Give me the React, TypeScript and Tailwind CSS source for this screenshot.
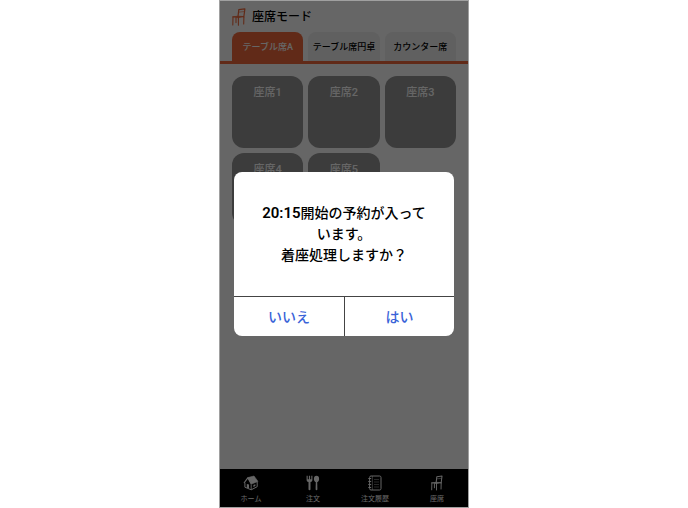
import { useState } from "react";

const tabs = ["テーブル席A", "テーブル席円卓", "カウンター席"];

const seats = ["座席1", "座席2", "座席3", "座席4", "座席5"];

function ChairIcon({ className }: { className?: string }) {
    return (
        <svg viewBox="0 0 14 18" fill="none" stroke="currentColor" strokeLinejoin="round" strokeLinecap="round" className={className} aria-hidden="true">
            <path d="M6 8.6 6.8 1.6 12.9.8 11.8 9" strokeWidth="1.2" />
            <path d="M6.8 4.2 12.4 3.5" strokeWidth=".6" />
            <path d="M.9 8.8 6 8.2 12 8.6 6.4 9.6Z" fill="currentColor" strokeWidth=".8" />
            <path d="M1 9 .8 17M6.4 9.6V17.2M11.9 9 11.7 16M4 9.8V14.6" strokeWidth="1.1" />
        </svg>
    );
}

function HomeIcon() {
    return (
        <svg viewBox="0 0 16 16" fill="none" strokeLinejoin="round" className="size-4" aria-hidden="true">
            <path d="M4.8 2.6 11 1 15 6.4 8.6 9Z" fill="currentColor" stroke="currentColor" strokeWidth=".6" />
            <path d="M1 8 4.8 2.8 8.4 9.2" stroke="currentColor" strokeWidth="1.2" />
            <path d="M1.9 7.8V12.2L8.2 14.8 14.2 11.7V7" stroke="currentColor" strokeWidth="1" />
            <path d="M8.2 9.4V14.8" stroke="currentColor" strokeWidth=".9" />
            <path d="M3.8 12.7V8.9L6 9.6V13.6Z" fill="currentColor" />
            <path d="M10.4 10.1 12.4 9.2V11L10.4 11.9Z" fill="currentColor" />
        </svg>
    );
}

function MealIcon() {
    return (
        <svg viewBox="0 0 16 16" className="size-4" fill="currentColor" aria-hidden="true">
            <path d="M1.6.8H2.7V4.2H3.9V.8H5.1V4.2H6.3V.8H7.4V5.2Q7.4 6.6 5.5 7.1V14.2Q5.5 15.2 4.5 15.2T3.5 14.2V7.1Q1.6 6.6 1.6 5.2Z" />
            <ellipse cx="11.5" cy="3.9" rx="2.6" ry="3.1" />
            <path d="M10.8 6H12.2L12.4 14.2Q12.4 15.2 11.5 15.2T10.6 14.2Z" />
        </svg>
    );
}

function NotebookIcon() {
    return (
        <svg viewBox="0 0 16 16" fill="none" stroke="currentColor" className="size-4" aria-hidden="true">
            <rect x="2.6" y="1" width="11.4" height="14" rx="1.4" strokeWidth="1" />
            <path d="M5.4 1V15" strokeWidth=".5" />
            <path d="M1.3 3.5H4.2M1.3 6.5H4.2M1.3 9.5H4.2M1.3 12.5H4.2" strokeWidth="1" />
            <path d="M7 4.5H12M7 7H12M7 9.5H12M7 12H12" strokeWidth=".4" />
        </svg>
    );
}

const navItems = [
    { label: "ホーム", icon: <HomeIcon /> },
    { label: "注文", icon: <MealIcon /> },
    { label: "注文履歴", icon: <NotebookIcon /> },
    { label: "座席", icon: <ChairIcon className="h-4 w-3" /> },
];

export default function App() {
    const [activeTab, setActiveTab] = useState(0);
    const [dialogOpen, setDialogOpen] = useState(true);

    return (
        <div className="min-h-screen bg-white font-['Roboto','Noto_Sans_CJK_JP',sans-serif] font-medium text-black">
            <div className="relative mx-auto flex min-h-screen max-w-[250px] flex-col border border-[#a0a0a0] bg-white" lang="ja">
                <header className="flex h-[31px] items-center gap-1.5 px-3">
                    <ChairIcon className="h-[18px] w-3.5 text-[#f26a3c]" />
                    <h1 className="text-xs leading-4">座席モード</h1>
                </header>

                <div className="grid grid-cols-3 gap-[5px] border-b-3 border-[#f26a3c] px-3">
                    {tabs.map((tab, i) => (
                        <button
                            key={tab}
                            type="button"
                            onClick={() => setActiveTab(i)}
                            className={`h-[29px] rounded-t-lg pt-0.5 text-[9px] whitespace-nowrap ${i === activeTab ? "bg-[#f26a3c] text-white" : "bg-[#f0f0f0]"}`}
                        >
                            {tab}
                        </button>
                    ))}
                </div>

                <main className="grid flex-1 grid-cols-3 content-start gap-[5px] px-3 pt-3">
                    {seats.map((seat) => (
                        <button
                            key={seat}
                            type="button"
                            className="flex h-[72px] justify-center rounded-xl bg-[#969696] pt-[9px] text-[11px] leading-4 text-white"
                        >
                            {seat}
                        </button>
                    ))}
                </main>

                <nav className="grid h-[38px] grid-cols-4 bg-black">
                    {navItems.map((item) => (
                        <a key={item.label} href="#" className="flex flex-col items-center gap-0.5 pt-1.5 text-[7px] leading-3 font-normal text-white">
                            {item.icon}
                            {item.label}
                        </a>
                    ))}
                </nav>

                {dialogOpen && (
                    <div className="absolute inset-0 flex items-center justify-center bg-black/60 px-3.5">
                        <div role="dialog" aria-modal="true" aria-labelledby="dialog-message" className="w-full overflow-hidden rounded-lg bg-white">
                            <p id="dialog-message" className="px-6 pt-[31px] pb-[30px] text-center text-sm leading-[21px]">
                                <span className="text-[15px] font-semibold">20:15</span>開始の予約が入って
                                <br />
                                います。
                                <br />
                                着座処理しますか？
                            </p>
                            <div className="grid grid-cols-2 border-t border-[#444] text-sm text-[#3a63d8]">
                                <button type="button" onClick={() => setDialogOpen(false)} className="h-[39px]">
                                    いいえ
                                </button>
                                <button type="button" onClick={() => setDialogOpen(false)} className="h-[39px] border-l border-[#444]">
                                    はい
                                </button>
                            </div>
                        </div>
                    </div>
                )}
            </div>
        </div>
    );
}
